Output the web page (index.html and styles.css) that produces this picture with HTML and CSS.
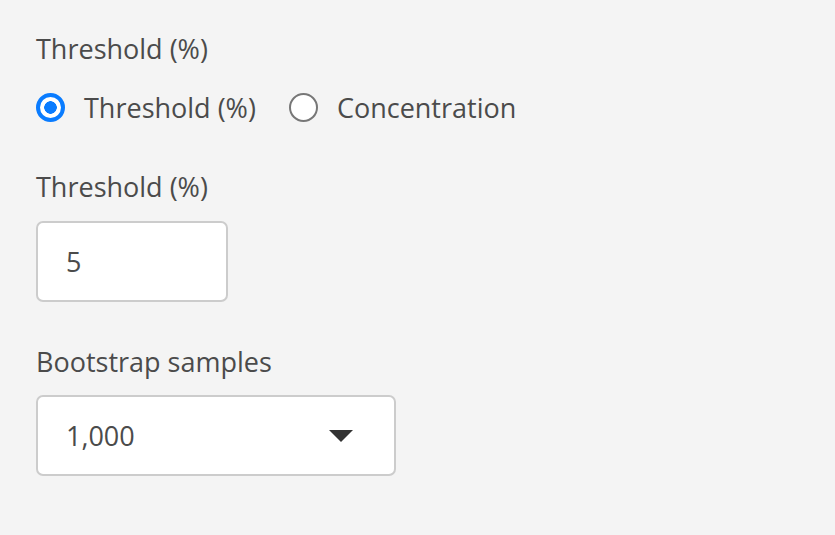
FILE: index.html
```html
<!DOCTYPE html>
<html>
<head>
<meta charset="utf-8">
<link rel="stylesheet" href="styles.css">
</head>
<body>
<div class="form">
  <div class="field">
    <div class="label">Threshold (%)</div>
    <div class="radios">
      <label class="radio"><span class="dot checked"></span><span class="rtext">Threshold (%)</span></label>
      <label class="radio"><span class="dot"></span><span class="rtext">Concentration</span></label>
    </div>
  </div>
  <div class="field f2">
    <div class="label">Threshold (%)</div>
    <div class="box input">5</div>
  </div>
  <div class="field f3">
    <div class="label">Bootstrap samples</div>
    <div class="box select"><span>1,000</span><span class="caret"></span></div>
  </div>
</div>
</body>
</html>
```
FILE: styles.css
```css
html, body { margin: 0; padding: 0; background: #f4f4f4; }
body { font-family: "Open Sans", "Noto Sans", sans-serif; color: #4b4b4b; font-size: 27px; }
.form { padding: 29.5px 0 0 36px; }
.label { line-height: 38px; height: 38px; }
.radios { display: flex; align-items: center; margin-top: 20.5px; gap: 33px; height: 38px; }
.radio { display: flex; align-items: center; gap: 19px; }
.dot { width: 29px; height: 29px; box-sizing: border-box; border-radius: 50%; border: 2.5px solid #777; background: #fff; flex: none; }
.dot.checked { border: 4px solid #0a7cff; background: radial-gradient(circle, #0a7cff 0 6px, #fff 6.5px); }
.f2 { margin-top: 42px; }
.f3 { margin-top: 41px; }
.box { box-sizing: border-box; background: #fff; border: 2px solid #ccc; border-radius: 7px; margin-top: 14.5px; display: flex; align-items: center; padding-left: 28px; }
.input { width: 192px; height: 81px; }
.select { width: 360px; height: 81px; justify-content: space-between; padding-right: 41px; }
.caret { width: 0; height: 0; border-left: 12px solid transparent; border-right: 12px solid transparent; border-top: 12px solid #333; }
```
